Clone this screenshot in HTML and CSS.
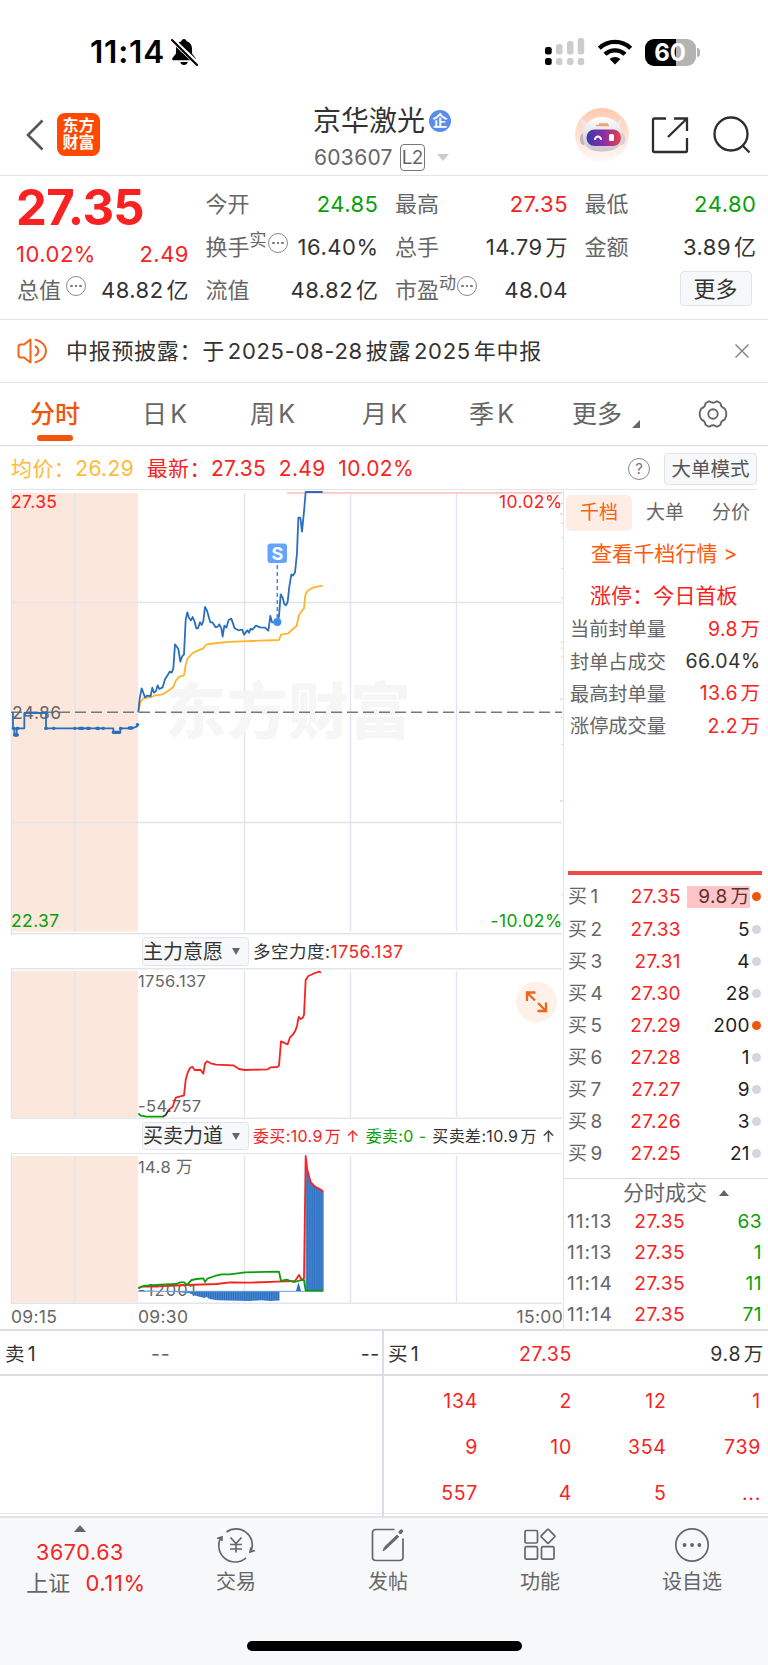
FILE: index.html
```html
<!DOCTYPE html>
<html lang="zh-CN">
<head>
<meta charset="utf-8">
<title>京华激光 603607</title>
<link rel="stylesheet" href="styles.css">
</head>
<body>
<div class="status">
  <span class="clock">11:14</span>
  <svg class="bell" width="30" height="30" viewBox="0 0 30 30"><path d="M15 2c-1.500 0-2.500 1-2.500 2.200C8.500 5.300 7 8.500 7 12v4.500L3.500 21c-.8 1.200-.3 2.300 1 2.300h21c1.300 0 1.800-1.100 1-2.300L23 16.500V12c0-3.500-1.500-6.700-5.500-7.800C17.500 3 16.500 2 15 2z"/><path d="M11.200 25h7.600c-.5 1.900-2 3-3.800 3s-3.300-1.100-3.800-3z"/><path d="M4 3.500 28 26.500" stroke="#fff" stroke-width="5"/><path d="M3 3 28 28" stroke="#000" stroke-width="2.100" stroke-linecap="round"/></svg>
  <svg class="signal" width="40" height="28" viewBox="0 0 40 28"><g fill="#ccc"><rect x="11" y="6" width="6.500" height="10.500" rx="2.500"/><rect x="22" y="3" width="6.500" height="13.500" rx="2.500"/><rect x="32.700" y="0" width="6.500" height="16.500" rx="2.500"/><rect x="11" y="20" width="6.500" height="7" rx="2.500"/><rect x="22" y="20" width="6.500" height="7" rx="2.500"/><rect x="32.700" y="20" width="6.500" height="7" rx="2.500"/></g><rect y="9" width="6.700" height="7.500" rx="2.300"/><rect y="20" width="6.700" height="7" rx="2.300"/></svg>
  <svg class="wifi" width="36" height="26" viewBox="0 0 36 26"><g fill="none" stroke="#000" stroke-width="4.300"><path d="M2.300 9.300a22.500 22.500 0 0 1 31.400 0"/><path d="M8 15.300a14.500 14.500 0 0 1 20 0"/></g><path d="M18 25.500l-5.400-5.400a8 8 0 0 1 10.800 0z"/></svg>
  <div class="battery"><span>60</span></div><i class="battery-tip"></i>
</div>

<header class="header">
  <div class="left">
    <svg width="20" height="32" viewBox="0 0 20 32"><path d="M17.500 1.500 3 16l14.500 14.500" fill="none" stroke="#555" stroke-width="2.600"/></svg>
    <div class="logo">东方<br>财富</div>
  </div>
  <div class="title">
    <div class="name">京华激光<span class="badge">企</span></div>
    <div class="code">603607<span class="l2">L2</span><i class="tri-down"></i></div>
  </div>
  <div class="right">
    <svg width="54" height="54" viewBox="0 0 54 54"><defs><linearGradient id="bg" x1="0" y1="0" x2="0" y2="1"><stop offset="0" stop-color="#ffc9ae"/><stop offset="1" stop-color="#fffaf8"/></linearGradient><linearGradient id="face" x1="0" y1="0" x2="1" y2="0"><stop offset="0" stop-color="#3939ad"/><stop offset=".5" stop-color="#8a2fa3"/><stop offset="1" stop-color="#e8404a"/></linearGradient><linearGradient id="helm" x1="0" y1="0" x2="0" y2="1"><stop offset="0" stop-color="#fff"/><stop offset="1" stop-color="#c9c4cb"/></linearGradient></defs><circle cx="27" cy="27" r="27" fill="url(#bg)"/><path d="M11 20C6 18 5 14 8 10c1 4 4 5 8 6zM41 20c5-2 6-6 5-10-2 4-5 5-8 6z" fill="#eee7e6"/><ellipse cx="8.500" cy="31" rx="3.500" ry="6" fill="#b9b6c0"/><ellipse cx="46.500" cy="31" rx="4" ry="6" fill="#d5d1d8"/><path d="M8 31C7 17 15 9 27 9s21 8 20 22c-1 10-11 12.500-20 12.500S9 41 8 31z" fill="url(#helm)"/><rect x="11.500" y="21.500" width="34.500" height="16.500" rx="8" fill="url(#face)"/><path d="M20 31c1.500-3.500 4.500-3.500 6 0" fill="none" stroke="#fff" stroke-width="2" stroke-linecap="round"/><rect x="34" y="26" width="5" height="7" rx="1.500" fill="#fff"/><path d="M21 17.500h13M24 16h9" stroke="#e9a56f" stroke-width="1.600"/></svg>
    <svg width="38" height="38" viewBox="0 0 38 38" fill="none" stroke="#2e2e2e" stroke-width="2.300"><path d="M15 2.500H3.500q-1.500 0-1.500 1.500v30.500q0 1.500 1.500 1.500h31q1.500 0 1.500-1.500V22M23 2.500h13V15M35.500 3 17 21"/></svg>
    <svg width="38" height="38" viewBox="0 0 38 38" fill="none" stroke="#2e2e2e" stroke-width="2.300"><circle cx="18" cy="18" r="16.500"/><path d="m29.500 29.500 7 7"/></svg>
  </div>
</header>

<section class="quote">
  <div class="last">27.35</div>
  <div class="delta"><span>10.02%</span><span>2.49</span></div>
  <div class="cell a1"><label>今开</label><b class="g">24.85</b></div>
  <div class="cell a2"><label>最高</label><b class="r">27.35</b></div>
  <div class="cell a3"><label>最低</label><b class="g">24.80</b></div>
  <div class="cell b1"><label>换手<sup>实</sup><i class="more"></i></label><b>16.40%</b></div>
  <div class="cell b2"><label>总手</label><b>14.79<u>万</u></b></div>
  <div class="cell b3"><label>金额</label><b>3.89<u>亿</u></b></div>
  <div class="cell c0"><label>总值<i class="more gap"></i></label><b>48.82<u>亿</u></b></div>
  <div class="cell c1"><label>流值</label><b>48.82<u>亿</u></b></div>
  <div class="cell c2"><label>市盈<sup>动</sup><i class="more"></i></label><b>48.04</b></div>
  <button class="btn more-btn">更多</button>
</section>

<section class="notice">
  <svg width="32" height="26" viewBox="0 0 32 26" fill="none" stroke="#f0651a" stroke-width="2" stroke-linejoin="round"><path d="M13.500 1.500v23L7 19.500H3.500Q1.500 19.500 1.500 17V9q0-2.500 2-2.500H7z"/><path d="M18.500 8.500a5 5 0 0 1 0 9M18.500 1.800c14 3 14 19.400 0 22.400" stroke-linecap="round"/></svg>
  <p>中报预披露：于<u>2025-08-28</u><u>披露</u><u>2025</u><u>年中报</u></p>
  <svg width="16" height="16" viewBox="0 0 16 16"><path d="m1.500 1.500 13 13m0-13-13 13" stroke="#888" stroke-width="1.500"/></svg>
</section>

<nav class="tabs">
  <span class="on">分时</span><span>日<u>K</u></span><span>周<u>K</u></span><span>月<u>K</u></span><span>季<u>K</u></span><span class="drop">更多<i></i></span>
  <svg width="30" height="30" viewBox="0 0 30 30" fill="none" stroke="#666" stroke-width="1.900" stroke-linejoin="round"><path d="M10.500 2.500h1.200q3.300 2.400 6.600 0h1.200L22.500 4.300q.5 4 4.200 5.200l1.500 3.500v4l-1.500 3.500q-3.700 1.200-4.200 5.200l-3 1.800h-1.200q-3.300-2.400-6.600 0h-1.200l-3-1.800Q7 21.700 3.300 20.500L1.800 17v-4l1.500-3.500Q7 8.300 7.500 4.300z"/><circle cx="15" cy="15" r="4.700"/></svg>
</nav>

<div class="info">
  <span class="avg">均价：26.29</span><span class="now">最新：27.35</span><span class="r">2.49</span><span class="r">10.02%</span>
  <i class="help">?</i><button class="btn">大单模式</button>
</div>

<main class="main">
  <div class="charts">
    <svg class="price" viewBox="0 490 564 445">
      <rect x="11" y="493" width="127" height="438.500" fill="#fce7dc"/>
      <g class="grid"><path d="M11.500 490v445M75 493v438.500M244.500 493v438.500M350.500 493v438.500M456.500 493v438.500M11 602.500h551M11 822.500h551M11 933.800h551"/></g>
      <text class="mark" x="165" y="734" textLength="246">东方财富</text>
      <path d="M287 492.800h275" stroke="#ffc4c8" stroke-width="1.800"/>
      <path d="M561 503.500h1.500M560 514h2.500M561 523h1.500M562 537v1M562 568v1M562 597v1M561 642h1.500M561 648h1.500M561 657h1.500M560 699h2.500M561 717.500h1.500M562 744v1M560 801h2.500M562 894v1" stroke="#ffaab0"/>
      <path d="M11 712.300h551" stroke="#777" stroke-width="1.500" stroke-dasharray="11 5"/>
      <text x="11" y="508" class="lr">27.35</text><text x="12" y="718.500" class="lk">24.86</text><text x="11" y="927" class="lg">22.37</text>
      <text x="562.500" y="508" class="lr end">10.02%</text><text x="562.500" y="927" class="lg end">-10.02%</text>
      <g transform="translate(0 485) scale(.33333)" class="line">
        <polyline stroke="#2a6fbd" points="39,682 39,730 43,730 43,750 50,750 50,730 73,730 73,684 138,684 138,730 340,730 340,742 361,742 361,730 395,730 410,725 415,718"/>
        <path d="M44 750h8M40 730h2M51 730h3M137 730h2M161 730h1M224 730h1M239 730h10M262 730h6M290 730h6M309 730h1M340 742h19M362 730h1M388 729h8M412 719h1" stroke="#2a6fbd" stroke-width="10" stroke-linecap="round"/>
        <polyline stroke="#fdb52d" points="415,682 421,652 430,640 455,636 462,632 488,628 505,617 520,606 527,588 536,576 552,571 557,540 563,520 578,504 595,496 610,490 618,479 650,474 700,470 760,468 837,465 843,449 865,445 875,435 890,423 896,393 902,382 912,370 916,330 922,318 938,308 968,302"/>
        <polyline stroke="#2a6fbd" points="415,682 419,640 425,610 435,637 441,632 452,633 457,608 462,623 468,618 473,601 478,612 488,607 495,583 505,567 509,560 515,563 520,550 525,478 535,492 541,530 546,515 552,508 557,405 562,382 567,399 573,406 578,396 583,408 589,430 594,430 600,412 605,420 610,408 615,366 621,377 631,412 637,412 647,427 653,425 658,418 664,430 668,455 673,422 679,428 686,405 694,401 704,430 715,436 727,434 732,449 742,436 747,443 752,431 757,434 768,422 780,427 795,428 805,437 811,393 816,412 832,412 837,393 842,328 848,338 853,357 858,361 863,350 868,305 874,268 879,272 885,262 891,205 895,98 901,98 906,140 912,80 917,21 968,21"/>
      </g>
      <path d="M277.300 565v55" stroke="#3d8cf5" stroke-width="1.500" stroke-dasharray="4 3"/><circle cx="277.300" cy="622" r="4" fill="#3d8cf5"/>
      <rect x="267.500" y="543.500" width="19.500" height="19.500" rx="3" fill="#64a4ff"/><text x="277.300" y="559.700" class="s">S</text>
    </svg>
    <div class="sub"><button class="btn">主力意愿<i></i></button><span>多空力度:<em class="r">1756.137</em></span></div>
    <svg class="will" viewBox="0 968 564 151">
      <rect x="11" y="971" width="127" height="146.500" fill="#fce7dc"/>
      <g class="grid"><path d="M11.500 968v150M75 971v146M244.500 971v146M350.500 971v146M456.500 971v146M11 968.800h551M11 1118.300h551"/></g>
      <text x="138" y="987" class="sm">1756.137</text><text x="138" y="1112" class="sm">-54.757</text>
      <g transform="translate(0 920) scale(.33333)" class="line">
        <polyline stroke="#0a9f0a" points="415,580 422,587 440,590 490,590"/><polyline stroke="#333" points="488,590 497,585 506,570"/>
        <polyline stroke="#f82222" points="505,570 518,560 527,533 552,526 557,480 563,458 570,444 577,440 584,450 602,450 610,461 615,430 621,424 632,430 648,434 700,436 717,447 735,450 803,448 812,442 832,441 837,437 843,364 863,373 870,352 880,342 886,332 891,318 896,291 902,297 908,294 912,285 917,180 925,168 945,159 958,155 963,158"/>
      </g>
      <circle cx="536.500" cy="1002" r="20.500" fill="#fdf1ea"/><path d="M527 1001v-8.500h8.500M527.500 993l7.500 7.500M546 1002.500v8.500h-8.500M545.500 1010.500l-7.500-7.500" fill="none" stroke="#f0651a" stroke-width="2.300"/>
    </svg>
    <div class="sub s2"><button class="btn">买卖力道<i></i></button><span class="r">委买:10.9<u>万</u> ↑</span><span class="g">委卖:0 -</span><span>买卖差:10.9<u>万</u> ↑</span></div>
    <svg class="force" viewBox="0 1153 564 151">
      <defs><pattern id="bars" width="1.800" height="8" patternUnits="userSpaceOnUse"><rect width="1.800" height="8" fill="#2a6fc2"/><rect width=".5" height="8" fill="#659ad6"/></pattern></defs>
      <rect x="11" y="1156" width="127" height="146.500" fill="#fce7dc"/>
      <g class="grid"><path d="M11.500 1153v150M75 1156v146M244.500 1156v146M350.500 1156v146M456.500 1156v146M11 1153.300h551M11 1303.300h551"/></g>
      <text x="138" y="1173" class="sm">14.8 万</text><text x="138" y="1296" class="sm" textLength="58">-12001</text>
      <path d="M305.500 1156l2 14 3.300 12 4.300 4.700 8.500 5v99.300h-18z" fill="url(#bars)"/>
      <path d="M146 1291h133.500v9.500l-10 .5-8-.7-12 .7-32-.7-8-1.300-3-2-2 1-8-2-8-3-20-1.500-22-1z" fill="url(#bars)"/>
      <path d="M138 1291.300h185" stroke="#6ba0dc"/><path d="M296 1291l2.500-9 2.500 9z" fill="#2a6fc2"/>
      <g transform="translate(0 920) scale(.33333)" class="line">
        <polyline stroke="#f82222" points="415,1105 425,1100 460,1100 560,1095 650,1092 690,1087 750,1088 830,1085 885,1083 897,1065 905,1080 912,1075 917,708 922,750 932,786 945,800 960,808 970,815"/>
        <polyline stroke="#0a9f0a" points="415,1104 430,1098 480,1094 530,1092 540,1087 553,1087 560,1095 575,1080 590,1077 610,1075 615,1086 622,1076 645,1068 665,1063 690,1063 735,1057 837,1055 843,1083 860,1079 880,1086 890,1084 905,1080 912,1080 917,1112 970,1112"/>
      </g>
    </svg>
    <div class="axis"><span>09:15</span><span>09:30</span><span class="end">15:00</span></div>
  </div>

  <aside class="side">
    <div class="stabs"><span class="on">千档</span><span>大单</span><span>分价</span></div>
    <div class="link">查看千档行情 &gt;</div>
    <div class="limit">涨停：今日首板</div>
    <div class="kv"><span>当前封单量</span><b class="r">9.8<u>万</u></b></div>
    <div class="kv"><span>封单占成交</span><b>66.04%</b></div>
    <div class="kv"><span>最高封单量</span><b class="r">13.6<u>万</u></b></div>
    <div class="kv"><span>涨停成交量</span><b class="r">2.2<u>万</u></b></div>
    <div class="redline"></div>
    <div class="bid"><span>买<u>1</u></span><b>27.35</b><em class="hl">9.8<u>万</u></em><i class="hot"></i></div>
    <div class="bid"><span>买<u>2</u></span><b>27.33</b><em>5</em><i></i></div>
    <div class="bid"><span>买<u>3</u></span><b>27.31</b><em>4</em><i></i></div>
    <div class="bid"><span>买<u>4</u></span><b>27.30</b><em>28</em><i></i></div>
    <div class="bid"><span>买<u>5</u></span><b>27.29</b><em>200</em><i class="hot"></i></div>
    <div class="bid"><span>买<u>6</u></span><b>27.28</b><em>1</em><i></i></div>
    <div class="bid"><span>买<u>7</u></span><b>27.27</b><em>9</em><i></i></div>
    <div class="bid"><span>买<u>8</u></span><b>27.26</b><em>3</em><i></i></div>
    <div class="bid"><span>买<u>9</u></span><b>27.25</b><em>21</em><i></i></div>
    <div class="ticks-h">分时成交<i></i></div>
    <div class="tick"><span>11:13</span><b>27.35</b><em>63</em></div>
    <div class="tick"><span>11:13</span><b>27.35</b><em>1</em></div>
    <div class="tick"><span>11:14</span><b>27.35</b><em>11</em></div>
    <div class="tick"><span>11:14</span><b>27.35</b><em>71</em></div>
  </aside>
</main>

<section class="queue">
  <div class="half">
    <div class="qh"><span>卖<u>1</u></span><b class="dash">--</b><em>--</em></div>
  </div>
  <div class="half buy">
    <div class="qh"><span>买<u>1</u></span><b class="r">27.35</b><em>9.8<u>万</u></em></div>
    <div class="qg"><span>134</span><span>2</span><span>12</span><span>1</span><span>9</span><span>10</span><span>354</span><span>739</span><span>557</span><span>4</span><span>5</span><span>...</span></div>
  </div>
</section>

<footer class="footer">
  <div class="index"><i></i><div class="pt">3670.63</div><div class="chg">上证<span>0.11%</span></div></div>
  <div class="item"><svg width="40" height="36" viewBox="0 0 40 36"><path d="M10.500 5A16.300 16.300 0 0 1 35.500 23.500M30 30.800A16.300 16.300 0 0 1 5 10.500M1 11.500l5-1.500v4M39 23.500l-5 1.500 1-4.500M14.500 10.500l5.500 6 5.500-6M20 16.500v9M14 17.500h12M14 22h12"/></svg>交易</div>
  <div class="item"><svg width="40" height="36" viewBox="0 0 40 36"><path d="M26.500 2.500H8Q4.500 2.500 4.500 6v24Q4.500 33.500 8 33.500h23.500Q35 33.500 35 30V11.500"/><path d="M15 24l1.500-4L29 8l1.800 1.800L18.500 21.500z" fill="#666" stroke-width=".8"/><path d="M32.300 5.200l1-1" stroke-width="3.600" stroke-linecap="round"/></svg>发帖</div>
  <div class="item"><svg width="40" height="36" viewBox="0 0 40 36"><rect x="5" y="3.500" width="12.500" height="12.500" rx="1.500"/><rect x="5" y="19.700" width="12.500" height="12.500" rx="1.500"/><rect x="21.500" y="19.700" width="12.500" height="12.500" rx="1.500"/><path d="M27.500 2.500q.5-.4 1 0l6.300 6.300q.4.500 0 1l-6.300 6.300q-.5.400-1 0l-6.300-6.300q-.4-.5 0-1z"/></svg>功能</div>
  <div class="item"><svg width="40" height="36" viewBox="0 0 40 36"><circle cx="20" cy="18" r="16.200"/><path d="M12.500 18h.1M20 18h.1M27.300 18h.1" stroke-width="3.800" stroke-linecap="round"/></svg>设自选</div>
  <div class="home"></div>
</footer>
</body>
</html>
```
FILE: styles.css
```css
* { box-sizing: border-box; }
body { margin: 0; width: 768px; height: 1665px; overflow: hidden; background: #fff; color: #333; font-family: Inter, "Noto Sans CJK SC", sans-serif; font-size: 21px; line-height: 1; }
i, em { font-style: normal; }
b { font-weight: 400; }
u { text-decoration: none; margin-left: .13em; }
svg { display: block; flex: none; }
p { margin: 0; }
.r { color: #f82222; }
.g { color: #0a9f0a; }
.btn { font: inherit; color: #333; background: #f7f8fa; border: 1.500px solid #e2e4ea; border-radius: 4px; padding: 0; white-space: nowrap; }

.status { display: flex; align-items: center; height: 104px; padding: 0 68px 0 90px; color: #000; }
.clock { font-size: 31.500px; font-weight: 600; letter-spacing: .8px; width: 78px; white-space: nowrap; }
.bell { margin-left: 1px; }
.signal { margin-left: 346px; }
.wifi { margin-left: 12px; }
.battery { margin-left: 12px; width: 51px; height: 27px; border-radius: 9px; background: linear-gradient(90deg, #000 60%, #b3b3b3 60%); color: #fff; font-size: 24px; font-weight: 700; text-align: center; line-height: 27px; }
.battery-tip { width: 3px; height: 9px; margin-left: 1.500px; border-radius: 0 4px 4px 0; background: #b3b3b3; }

.header { display: grid; grid-template-columns: 280px 1fr 280px; height: 72px; border-bottom: 1.500px solid #e3e3e6; }
.left { display: flex; align-items: center; gap: 12px; padding: 0 0 10px 25px; }
.logo { width: 43px; height: 43px; border-radius: 8px; background: #ff4800; color: #fff; font-size: 16px; line-height: 17px; font-weight: 700; text-align: center; padding-top: 4px; }
.title { padding: 2px 0 0 33px; }
.name { display: flex; align-items: center; height: 29px; font-size: 28px; white-space: nowrap; }
.badge { width: 22px; height: 22px; margin-left: 4px; border-radius: 50%; background: #5b8cec; color: #fff; font-size: 15px; line-height: 21px; font-weight: 700; text-align: center; }
.code { display: flex; align-items: center; margin-top: 8px; height: 28px; padding-left: 1px; font-size: 21px; letter-spacing: .3px; color: #666; }
.l2 { width: 25px; height: 27px; margin-left: 7px; border: 1.500px solid #777; border-radius: 4px; font-size: 19px; line-height: 25px; letter-spacing: -.6px; text-align: center; }
.tri-down { margin-left: 12px; border: 6.500px solid transparent; border-top: 7px solid #ccc; border-bottom: 0; }
.right { display: flex; align-items: center; padding: 0 17px 10px 0; justify-content: flex-end; gap: 24px; }
.right svg:first-child { margin-right: -2px; }

.quote { display: grid; grid-template-columns: 171px 172px 172px 171px; column-gap: 17.500px; grid-template-rows: 43px 43px 43px; height: 144px; padding: 6.500px 0 0 17px; border-bottom: 1.500px solid #e3e3e6; font-size: 22px; letter-spacing: .5px; }
.last { grid-area: 1 / 1; margin-left: -1px; font-size: 49px; font-weight: 700; color: #f82222; letter-spacing: -.7px; line-height: 49px; }
.delta { grid-area: 2 / 1; display: flex; justify-content: space-between; align-items: center; padding: 13px 0 0 0; margin: 0 -1px; color: #f82222; }
.cell { display: flex; justify-content: space-between; align-items: center; white-space: nowrap; margin-right: -1px; }
.cell label { display: flex; align-items: center; color: #666; font-size: 22px; letter-spacing: 0; }
.cell sup { font-size: 17px; margin-top: -14px; }
.a1 { grid-area: 1 / 2; } .a2 { grid-area: 1 / 3; } .a3 { grid-area: 1 / 4; }
.b1 { grid-area: 2 / 2; } .b2 { grid-area: 2 / 3; } .b3 { grid-area: 2 / 4; }
.c0 { grid-area: 3 / 1; } .c1 { grid-area: 3 / 2; } .c2 { grid-area: 3 / 3; }
.more { width: 20px; height: 20px; margin: -9px 0 0 1px; border: 1.300px solid #888; border-radius: 50%; background: radial-gradient(circle at 4.500px 50%, #777 1px, transparent 1.500px), radial-gradient(circle at 9px 50%, #777 1px, transparent 1.500px), radial-gradient(circle at 13.500px 50%, #777 1px, transparent 1.500px); }
.more.gap { margin-left: 5px; }
.more-btn { grid-area: 3 / 4; width: 72px; height: 35px; justify-self: end; align-self: center; margin-right: 4px; margin-top: -3px; font-size: 22px; line-height: 30px; letter-spacing: 0; }

.notice { display: flex; align-items: center; height: 63px; padding: 0 18px 0 17px; border-bottom: 1.500px solid #e3e3e6; font-size: 22px; letter-spacing: .7px; }
.notice p { flex: 1; margin-left: 17px; }

.tabs { display: flex; align-items: center; height: 63px; padding: 0 40px 0 30px; border-bottom: 1.500px solid #d8d9e0; font-size: 25px; color: #666; position: relative; }
.tabs span { width: 110px; white-space: nowrap; }
.tabs span:nth-child(1) { width: 112px; }
.tabs span:nth-child(2) { width: 108px; }
.tabs span:nth-child(3) { width: 112px; }
.tabs span:nth-child(4) { width: 107px; }
.tabs span:nth-child(5) { width: 103px; }
.tabs .drop { display: flex; align-items: flex-end; width: 126px; }
.drop i { margin-left: 10px; border-left: 8px solid transparent; border-bottom: 8px solid #666; margin-bottom: -1px; }
.tabs .on { color: #f0560b; font-weight: 500; }
.tabs .on::after { content: ""; position: absolute; left: 37px; top: 52px; width: 36px; height: 5.500px; border-radius: 3px; background: #f0560b; }

.info { display: flex; align-items: center; height: 44px; padding-top: 2px; margin: 0 11px; border-bottom: 1.500px solid #e3e4ea; white-space: nowrap; font-size: 21px; letter-spacing: .4px; }
.info span { margin-right: 12.500px; }
.info .avg { color: #fdbb3c; }
.info .now { color: #f82222; }
.help { width: 22px; height: 22px; margin: 0 14px 0 auto; border: 1.300px solid #888; border-radius: 50%; color: #777; font-size: 15px; line-height: 19px; text-align: center; letter-spacing: 0; }
.info .btn { width: 93px; height: 32px; font-size: 19.500px; color: #555; line-height: 28px; letter-spacing: 0; }

.main { display: grid; grid-template-columns: 564px 204px; height: 841px; border-bottom: 2px solid #dcdde4; }
.charts { border-right: 1.500px solid #e3e4ea; }
.charts svg { width: 564px; margin-right: -2px; }
.price { height: 445px; } .will, .force { height: 151px; }
.grid { fill: none; stroke: #e2e5ec; stroke-width: 1.500; }
.line polyline, .line path { fill: none; stroke-linejoin: round; }
.line polyline { stroke-width: 5.400; }
.charts text { font-size: 17.500px; letter-spacing: .4px; fill: #666; }
.charts .lr { fill: #f82222; } .charts .lg { fill: #0a9f0a; }
.charts .end { text-anchor: end; }
.charts .sm { font-size: 16.500px; }
.charts .mark { font-size: 61px; font-weight: 900; letter-spacing: 0; fill: #f6f6f6; }
.charts .s { font-size: 18px; font-weight: 700; letter-spacing: 0; fill: #fff; text-anchor: middle; }
.sub { display: flex; align-items: center; height: 33px; padding-left: 142px; font-size: 17.500px; letter-spacing: .5px; white-space: nowrap; }
.sub .btn { display: flex; align-items: center; width: 107px; height: 28.500px; font-size: 20px; letter-spacing: 0; margin-right: 4px; }
.sub .btn i { margin-left: 9px; border: 4px solid transparent; border-top: 7px solid #666; border-bottom: 0; }
.s2 { height: 34px; font-size: 16px; letter-spacing: .35px; }
.s2 span + span { margin-left: 6px; }
.axis { display: flex; height: 26px; align-items: center; padding: 0 0 0 11px; font-size: 17.500px; letter-spacing: .3px; color: #666; }
.axis span { width: 127px; }
.axis .end { margin-left: auto; width: auto; }

.side { padding-left: 2px; white-space: nowrap; letter-spacing: .4px; }
.stabs { display: flex; margin-top: 5px; height: 36px; font-size: 19px; line-height: 36px; letter-spacing: 0; color: #666; text-align: center; }
.stabs span { width: 66px; border-radius: 5px; }
.stabs .on { background: #feede4; color: #f8600f; }
.link { margin-top: 12px; height: 22px; padding-left: 25px; font-size: 21px; line-height: 22px; letter-spacing: .1px; color: #ff5a0a; }
.limit { height: 22px; margin: 20px 0 7px; padding-left: 24px; font-size: 21px; line-height: 22px; letter-spacing: .1px; color: #f82222; }
.kv { display: flex; justify-content: space-between; align-items: center; height: 32.100px; padding: 0 7.500px 0 4px; font-size: 19.200px; color: #666; }
.kv span { letter-spacing: 0; }
.kv b { color: #333; font-size: 19.500px; } .kv .r { color: #f82222; }
.redline { height: 4px; margin: 129px 6px 5.500px 2px; background: #f04848; }
.bid { display: grid; grid-template-columns: 50px 63px 69px 12px; align-items: center; height: 32.100px; padding-left: 2px; font-size: 19px; color: #666; }
.bid u { margin-left: 3px; }
.bid b { color: #f82222; text-align: right; }
.bid em { color: #222; text-align: right; }
.bid .hl { justify-self: end; width: 63px; height: 22px; line-height: 22px; background: #fdc5c8; color: #5c2d2d; }
.bid i { width: 9px; height: 9px; margin-left: 2px; border-radius: 50%; background: #d5d7de; }
.bid .hot { background: #f0560b; }
.ticks-h { display: flex; align-items: center; height: 29px; margin: 8px 0 -.5px -2px; border-top: 1.500px solid #dcdde4; padding-left: 59px; font-size: 21px; letter-spacing: 0; color: #666; }
.ticks-h i { margin-left: 12px; border: 5px solid transparent; border-bottom: 6px solid #666; border-top: 0; }
.tick { display: grid; grid-template-columns: 50px 68px 77px; align-items: center; height: 31px; padding-left: 1px; font-size: 19.200px; color: #666; }
.tick span { letter-spacing: .9px; }
.tick b { color: #f82222; text-align: right; }
.tick em { color: #0a9f0a; text-align: right; }

.queue { display: grid; grid-template-columns: 382px 386px; height: 183px; border-bottom: 1px solid #e6e7ec; letter-spacing: .7px; }
.buy { border-left: 2px solid #dcdde4; }
.qh { display: grid; grid-template-columns: 60px 1fr 1fr; align-items: center; height: 45px; border-bottom: 2px solid #dcdde4; padding: 5px 5px 0; font-size: 19.500px; }
.half:first-child .qh { grid-template-columns: 146px 1fr 1fr; padding-right: 2px; }
.buy .qh { grid-template-columns: 60px 124px 1fr; padding: 5px 4px 0; }
.qh b { text-align: right; } .qh .dash { text-align: left; color: #666; }
.qh em { text-align: right; }
.qg { display: grid; grid-template-columns: 94px 94px 94.500px 94.500px; grid-auto-rows: 46.200px; align-items: center; padding-top: 2.500px; color: #f82222; text-align: right; font-size: 19.500px; }

.footer { display: grid; grid-template-columns: 160px 152px 152px 152px 152px; grid-template-rows: 123px 1fr; height: 152px; margin-top: 2px; border-top: 2px solid #e3e4e8; background: #f7f8fa; color: #666; }
.index { display: flex; flex-direction: column; align-items: center; padding-top: 7px; }
.index i { border: 6.500px solid transparent; border-bottom: 7px solid #666; border-top: 0; }
.pt { margin-top: 10px; color: #f82222; font-size: 21.500px; letter-spacing: .6px; }
.chg { margin-top: 8px; font-size: 22px; display: flex; align-items: center; padding-left: 12px; }
.chg span { color: #f82222; font-size: 22px; letter-spacing: .6px; margin-left: 15px; }
.item { display: flex; flex-direction: column; align-items: center; font-size: 20px; padding-top: 9px; gap: 9px; }
.item svg { fill: none; stroke: #666; stroke-width: 1.700; }
.home { grid-column: 1 / -1; justify-self: center; width: 275px; height: 9.500px; border-radius: 5px; background: #000; }
```
